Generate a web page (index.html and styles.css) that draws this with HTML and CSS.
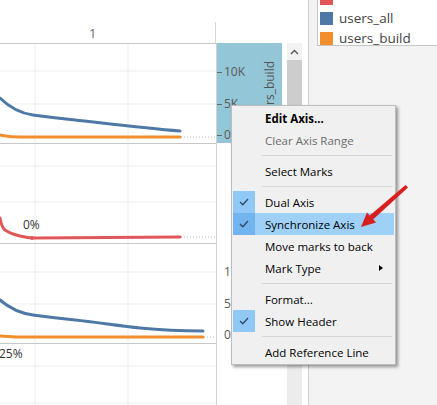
FILE: index.html
```html
<!DOCTYPE html>
<html>
<head>
    <title>Dual Axis</title>
    <meta charset="UTF-8">
    <link rel="stylesheet" href="styles.css">
</head>
<body>
    <div class="app">
        <div class="view">
            <div class="col-head"><span>1</span></div>
            <div class="col-head-axis"></div>

            <!-- pane 1: users -->
            <div class="plot">
                <svg width="216" height="99" viewBox="0 0 216 99">
                    <g class="grid">
                        <line x1="0" y1="27" x2="216" y2="27"/>
                        <line x1="0" y1="60" x2="216" y2="60"/>
                        <line x1="35" y1="0" x2="35" y2="99"/>
                        <line x1="128" y1="0" x2="128" y2="99"/>
                    </g>
                    <line class="dots" x1="181" y1="93" x2="216" y2="93"/>
                    <path class="l-orange" d="M0 91 C6 92 10 93 20 93 L180 93"/>
                    <path class="l-blue" d="M0 54 C8 62 18 69 33 71 S55 74 75 76 S140 84 180 87"/>
                </svg>
            </div>
            <div class="axis selected">
                <div class="ticks">
                    <div class="tick" style="top: 29px">10K</div>
                    <div class="tick" style="top: 61px">5K</div>
                    <div class="tick" style="top: 92px">0</div>
                </div>
                <div class="axis-title">users_build</div>
            </div>

            <!-- pane 2: percent -->
            <div class="plot">
                <svg width="216" height="99" viewBox="0 0 216 99">
                    <g class="grid">
                        <line x1="0" y1="22" x2="216" y2="22"/>
                        <line x1="0" y1="58" x2="216" y2="58"/>
                        <line x1="35" y1="0" x2="35" y2="99"/>
                        <line x1="128" y1="0" x2="128" y2="99"/>
                    </g>
                    <line class="dots" x1="181" y1="93" x2="216" y2="93"/>
                    <path class="l-red" d="M0 74 C1 80 2 84 5 86 S12 90 20 92 S28 94 34 94 L180 93"/>
                    <circle cx="32" cy="94" r="2" fill="#e15759"/>
                    <text class="mark-label" x="23" y="85">0%</text>
                </svg>
            </div>
            <div class="axis"></div>

            <!-- pane 3: users -->
            <div class="plot">
                <svg width="216" height="99" viewBox="0 0 216 99">
                    <g class="grid">
                        <line x1="0" y1="28" x2="216" y2="28"/>
                        <line x1="0" y1="60" x2="216" y2="60"/>
                        <line x1="35" y1="0" x2="35" y2="99"/>
                        <line x1="128" y1="0" x2="128" y2="99"/>
                    </g>
                    <line class="dots" x1="204" y1="93" x2="216" y2="93"/>
                    <path class="l-orange" d="M0 92 C6 92 12 93 22 93 L203 93"/>
                    <path class="l-blue" d="M0 56 C8 63 18 69 33 71 S55 74 75 76 S120 82 140 84 S180 87 203 87"/>
                </svg>
            </div>
            <div class="axis">
                <div class="ticks">
                    <div class="tick plain" style="top: 29px">10K</div>
                    <div class="tick plain" style="top: 61px">5K</div>
                    <div class="tick plain" style="top: 92px">0</div>
                </div>
                <div class="axis-title">users_build</div>
            </div>

            <!-- pane 4: percent -->
            <div class="plot">
                <svg width="216" height="61" viewBox="0 0 216 61">
                    <g class="grid">
                        <line x1="0" y1="22" x2="216" y2="22"/>
                        <line x1="0" y1="59" x2="216" y2="59"/>
                        <line x1="35" y1="0" x2="35" y2="61"/>
                        <line x1="128" y1="0" x2="128" y2="61"/>
                    </g>
                    <text class="mark-label" x="-1" y="14">25%</text>
                </svg>
            </div>
            <div class="axis"></div>
        </div>

        <div class="scrollbar">
            <div class="scroll-btn">
                <svg width="9" height="6" viewBox="0 0 9 6"><polyline points="1,5 4.5,1.5 8,5" fill="none" stroke="#555" stroke-width="1.4"/></svg>
            </div>
            <div class="scroll-thumb"></div>
        </div>

        <div class="side">
            <div class="legend">
                <div class="legend-list">
                    <div class="legend-item"><span class="swatch red"></span></div>
                    <div class="legend-item"><span class="swatch blue"></span>users_all</div>
                    <div class="legend-item"><span class="swatch orange"></span>users_build</div>
                </div>
            </div>
        </div>

        <div class="menu">
            <div class="item bold"><span class="check"></span>Edit Axis...</div>
            <div class="item disabled"><span class="check"></span>Clear Axis Range</div>
            <div class="sep"></div>
            <div class="item"><span class="check"></span>Select Marks</div>
            <div class="sep"></div>
            <div class="item checked"><span class="check"><svg width="10" height="8" viewBox="0 0 10 8"><polyline points="1,4 3.8,6.8 9,1" fill="none" stroke="#2d4a66" stroke-width="1.3"/></svg></span>Dual Axis</div>
            <div class="item checked active"><span class="check"><svg width="10" height="8" viewBox="0 0 10 8"><polyline points="1,4 3.8,6.8 9,1" fill="none" stroke="#2d4a66" stroke-width="1.3"/></svg></span>Synchronize Axis</div>
            <div class="item"><span class="check"></span>Move marks to back</div>
            <div class="item"><span class="check"></span>Mark Type<span class="sub-arrow"></span></div>
            <div class="sep"></div>
            <div class="item"><span class="check"></span>Format...</div>
            <div class="item checked"><span class="check"><svg width="10" height="8" viewBox="0 0 10 8"><polyline points="1,4 3.8,6.8 9,1" fill="none" stroke="#2d4a66" stroke-width="1.3"/></svg></span>Show Header</div>
            <div class="sep"></div>
            <div class="item"><span class="check"></span>Add Reference Line</div>
        </div>

        <svg class="pointer" width="60" height="50" viewBox="355 182 60 50">
            <polygon points="405.5,185 408,187.5 373,219.5 369.5,215.8" fill="#d81e1e"/>
            <polygon points="361,227 367,212.5 376,222.5" fill="#d81e1e"/>
        </svg>
    </div>
</body>
</html>
```

FILE: styles.css
```css
:root {
    --grid: #ededed;
    --border: #cfcfcf;
    --blue: #4e79a7;
    --orange: #f28e2b;
    --red: #e15759;
    --teal: #93c6d6;
}

body {
    margin: 0;
    background: #fff;
    font-family: 'Open Sans', 'Noto Sans', sans-serif;
}

.app {
    position: relative;
    display: flex;
    width: 437px;
    height: 405px;
    overflow: hidden;
}

/* view */

.view {
    display: grid;
    grid-template-columns: 217px 70px;
    grid-template-rows: 43px 100px 100px 100px 62px;
}

.col-head {
    display: flex;
    align-items: flex-end;
}

.col-head span {
    display: block;
    width: 216px;
    height: 21px;
    border-right: 1px solid #d6d6d6;
    padding-left: 89px;
    box-sizing: border-box;
    font-size: 13px;
    line-height: 22px;
    color: #6b6b6b;
}

.plot {
    border-top: 1px solid #c8c8c8;
    border-right: 1px solid #d2d2d2;
}

.plot svg {
    display: block;
    overflow: visible;
}

.grid line {
    stroke: var(--grid);
    stroke-width: 1;
}

.dots {
    stroke: #b9b9b9;
    stroke-width: 1;
    stroke-dasharray: 1 2;
}

.l-blue, .l-orange, .l-red {
    fill: none;
    stroke-width: 3;
    stroke-linecap: round;
    stroke-linejoin: round;
}

.l-blue { stroke: var(--blue); }
.l-orange { stroke: var(--orange); }
.l-red { stroke: var(--red); }

.mark-label {
    font-size: 12px;
    fill: #333;
}

.axis {
    display: flex;
    margin-right: 5px;
}

.axis.selected {
    background: var(--teal);
}

.ticks {
    position: relative;
    flex: 1;
}

.tick {
    position: absolute;
    left: 0;
    transform: translateY(-50%);
    font-size: 12px;
    line-height: 14px;
    color: #5a5a5a;
    padding-left: 7px;
}

.tick::before {
    content: '';
    position: absolute;
    left: 0;
    top: 7px;
    width: 5px;
    height: 1px;
    background: #666;
}

.tick.plain::before {
    display: none;
}

.axis-title {
    writing-mode: vertical-rl;
    transform: rotate(180deg);
    align-self: center;
    width: 18px;
    margin-right: 3px;
    font-size: 12px;
    line-height: 18px;
    color: #555;
}

/* scrollbar */

.scrollbar {
    width: 15px;
    margin-top: 43px;
    background: #ececec;
    display: flex;
    flex-direction: column;
}

.scroll-btn {
    height: 17px;
    background: #f2f2f2;
    display: flex;
    align-items: center;
    justify-content: center;
}

.scroll-thumb {
    height: 240px;
    background: #cdcdcd;
}

/* side panel */

.side {
    flex: 1;
    margin-left: 6px;
    background: #f3f3f3;
    border-left: 1px solid #cfcfcf;
    padding-left: 8px;
}

.legend {
    height: 45px;
    background: #fff;
    border-left: 1px solid #c6c6c6;
    border-bottom: 1px solid #c6c6c6;
    overflow: hidden;
}

.legend-list {
    margin-top: -12px;
    padding-left: 2px;
}

.legend-item {
    display: flex;
    align-items: center;
    gap: 6px;
    height: 20px;
    font-size: 13.5px;
    color: #444;
}

.swatch {
    width: 13px;
    height: 13px;
}

.swatch.red { background: var(--red); }
.swatch.blue { background: var(--blue); }
.swatch.orange { background: var(--orange); }

/* context menu */

.menu {
    position: absolute;
    left: 231px;
    top: 105px;
    width: 163px;
    padding: 1px 0;
    background: #f0f0f0;
    border: 1px solid #bdbdbd;
    box-shadow: 2px 2px 3px rgba(0, 0, 0, 0.4);
    font-size: 11.5px;
}

.item {
    display: flex;
    align-items: center;
    height: 22px;
    margin: 0 1px 0 1px;
    color: #000;
}

.item.bold { font-weight: 700; }
.item.disabled { color: #6d6d6d; }

.check {
    width: 22px;
    height: 22px;
    margin-right: 10px;
    display: flex;
    align-items: center;
    justify-content: center;
}

.item.checked .check { background: #91c9f6; }
.item.active { background: #9ed0f8; }
.item.active .check { background: #72b5ee; }

.sub-arrow {
    margin-left: auto;
    margin-right: 11px;
    width: 0;
    height: 0;
    border-top: 3.5px solid transparent;
    border-bottom: 3.5px solid transparent;
    border-left: 4px solid #000;
}

.sep {
    height: 1px;
    margin: 4px 3px 4px 30px;
    background: #d6d6d6;
}

.pointer {
    position: absolute;
    left: 355px;
    top: 182px;
}
```
